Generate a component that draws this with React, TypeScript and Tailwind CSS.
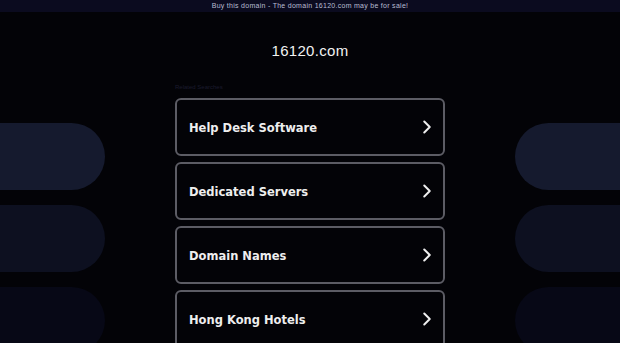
import { ChevronRight } from "lucide-react";

const links = [
  "Help Desk Software",
  "Dedicated Servers",
  "Domain Names",
  "Hong Kong Hotels",
];

const pillColors = ["bg-[#151a2e]", "bg-[#0d1020]", "bg-[#070816]"];

export default function App() {
  return (
    <div className="h-[343px] w-[620px] overflow-hidden bg-[#030307] font-['Liberation_Sans',sans-serif]">
      {/* top banner */}
      <div className="flex h-3 items-center justify-center bg-[#0b0b1f] text-[7px] tracking-[0.04em] text-[#b9bdd2]">
        Buy this domain - The domain 16120.com may be for sale!
      </div>

      <div className="flex">
        {/* left decoration */}
        <div className="flex w-[105px] flex-col gap-[15px] pt-[111px]">
          {pillColors.map((c) => (
            <div key={c} className={`h-[67px] rounded-r-full ${c}`} />
          ))}
        </div>

        {/* main column */}
        <div className="mx-[70px] flex w-[270px] flex-col">
          <h1 className="mt-[30px] text-center text-[15px] leading-[18px] tracking-[0.02em] text-[#f2f2f2]">
            16120.com
          </h1>
          <div className="mt-[22px] h-[10px] text-[6px] leading-[10px] text-[#1b1b2e]">
            Related Searches
          </div>
          <div className="mt-[6px] flex flex-col gap-[6px]">
            {links.map((l) => (
              <div
                key={l}
                className="flex h-[58px] items-center justify-between rounded-[6px] border-2 border-[#5c5c64] pl-[12px] pr-[5px] font-['DejaVu_Sans',sans-serif] text-[11.5px] font-bold text-[#eeeeee]"
              >
                <span className="pt-[3px]">{l}</span>
                <ChevronRight className="h-[22px] w-[22px]" strokeWidth={2.2} />
              </div>
            ))}
          </div>
        </div>

        {/* right decoration */}
        <div className="flex w-[105px] flex-col gap-[15px] pt-[111px]">
          {pillColors.map((c) => (
            <div key={c} className={`h-[67px] rounded-l-full ${c}`} />
          ))}
        </div>
      </div>
    </div>
  );
}
